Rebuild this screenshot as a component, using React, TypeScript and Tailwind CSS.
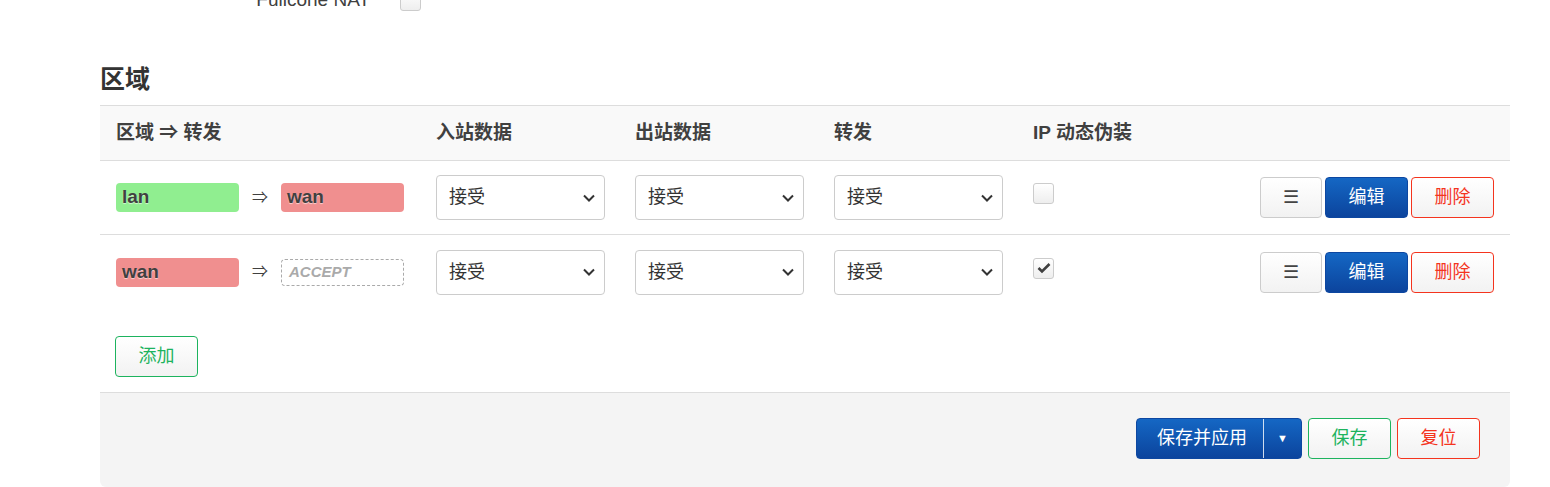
import React from 'react';

const font = { fontFamily: '"Liberation Sans", "Noto Sans CJK SC", sans-serif' };

const btn = 'h-[41px] rounded-[4px] border text-[18px] flex items-center justify-center';
const whiteBtn = 'bg-gradient-to-b from-white to-[#f2f2f2]';

function Chevron() {
  return (
    <svg width="14" height="14" viewBox="0 0 14 14" className="text-[#333]">
      <path d="M2 4.5 L7 9.5 L12 4.5" fill="none" stroke="currentColor" strokeWidth="2" />
    </svg>
  );
}

function Select() {
  return (
    <div className="w-[169px] h-[45px] border border-[#ccc] rounded-[4px] bg-white flex items-center justify-between pl-3 pr-[8px] text-[18px] text-[#333]">
      <span>接受</span>
      <Chevron />
    </div>
  );
}

function Checkbox({ checked }: { checked?: boolean }) {
  return (
    <div className="w-[21px] h-[21px] rounded-[3px] border border-[#ccc] bg-gradient-to-b from-white to-[#eee] flex items-center justify-center">
      {checked && (
        <svg width="14" height="12" viewBox="0 0 14 12">
          <path d="M1.5 6 L5 9.5 L12.5 2" fill="none" stroke="#404040" strokeWidth="2.6" />
        </svg>
      )}
    </div>
  );
}

function Badge({ name, color }: { name: string; color: string }) {
  return (
    <div
      className={`w-[123px] h-[29px] rounded-[4px] pl-[6px] flex items-center text-[19px] font-bold text-[#404040] ${color}`}
      style={{ textShadow: '0 1px 1px rgba(255,255,255,0.6)' }}
    >
      {name}
    </div>
  );
}

function Actions() {
  return (
    <div className="flex gap-[3px] justify-end">
      <button className={`${btn} ${whiteBtn} w-[62px] border-[#ccc] text-[#444]`}>☰</button>
      <button className={`${btn} w-[83px] border-[#0d47a1] bg-gradient-to-b from-[#1567c4] to-[#0c449d] text-white`}>编辑</button>
      <button className={`${btn} ${whiteBtn} w-[83px] border-[#f4341e] text-[#f4341e]`}>删除</button>
    </div>
  );
}

const grid = 'grid grid-cols-[320px_199px_199px_199px_199px_1fr] items-center';

export default function App() {
  return (
    <div className="w-[1550px] h-[487px] overflow-hidden bg-white text-[#404040]" style={font}>
      <div className="pl-[100px] pr-[40px]">
        {/* previous section, scrolled mostly out of view */}
        <div className="flex items-center -mt-[11px] h-[22px]">
          <div className="w-[270px] text-right text-[19px] text-[#404040]">Fullcone NAT</div>
          <div className="ml-[30px]">
            <Checkbox />
          </div>
        </div>

        <h3 className="mt-[53px] text-[25px] font-bold leading-[30px] text-[#333]">区域</h3>

        <div className="mt-[11px]">
          <div className={`${grid} h-[56px] bg-[#f9f9f9] border-y border-[#ddd] text-[19px] font-bold text-[#404040]`}>
            <div className="pl-4">区域 ⇒ 转发</div>
            <div className="pl-4">入站数据</div>
            <div className="pl-4">出站数据</div>
            <div className="pl-4">转发</div>
            <div className="pl-4">IP 动态伪装</div>
            <div />
          </div>

          <div className={`${grid} h-[74px] border-b border-[#ddd]`}>
            <div className="pl-4 flex items-center">
              <Badge name="lan" color="bg-[#90ee90]" />
              <span className="mx-[13px] text-[16px] text-[#404040]">⇒</span>
              <Badge name="wan" color="bg-[#f08f8f]" />
            </div>
            <div className="pl-4"><Select /></div>
            <div className="pl-4"><Select /></div>
            <div className="pl-4"><Select /></div>
            <div className="pl-4 mb-[8px]"><Checkbox /></div>
            <div className="pr-4"><Actions /></div>
          </div>

          <div className={`${grid} h-[74px]`}>
            <div className="pl-4 flex items-center">
              <Badge name="wan" color="bg-[#f08f8f]" />
              <span className="mx-[13px] text-[16px] text-[#404040]">⇒</span>
              <div className="w-[123px] h-[27px] rounded-[4px] border border-dashed border-[#aaa] pl-[7px] flex items-center text-[15px] font-bold italic text-[#aaa]">
                ACCEPT
              </div>
            </div>
            <div className="pl-4"><Select /></div>
            <div className="pl-4"><Select /></div>
            <div className="pl-4"><Select /></div>
            <div className="pl-4 mb-[8px]"><Checkbox checked /></div>
            <div className="pr-4"><Actions /></div>
          </div>

          <div className="pl-[15px] pt-[27px] pb-[15px]">
            <button className={`${btn} ${whiteBtn} w-[83px] border-[#1db35e] text-[#1db35e]`}>添加</button>
          </div>
        </div>

        <div className="border-t border-[#ddd] bg-[#f4f4f4] rounded-b-[6px] h-[95px] pt-[25px] pr-[30px] flex justify-end items-start gap-[6px]">
          <div className="h-[41px] w-[166px] rounded-[4px] border border-[#0d47a1] bg-gradient-to-b from-[#1567c4] to-[#0c449d] text-white text-[18px] flex items-center">
            <span className="flex-1 pl-[20px]">保存并应用</span>
            <span className="h-[39px] w-px bg-white/80" />
            <span className="w-[37px] text-center text-[11px]">▼</span>
          </div>
          <button className={`${btn} ${whiteBtn} w-[83px] border-[#1db35e] text-[#1db35e]`}>保存</button>
          <button className={`${btn} ${whiteBtn} w-[83px] border-[#f4341e] text-[#f4341e]`}>复位</button>
        </div>
      </div>
    </div>
  );
}
